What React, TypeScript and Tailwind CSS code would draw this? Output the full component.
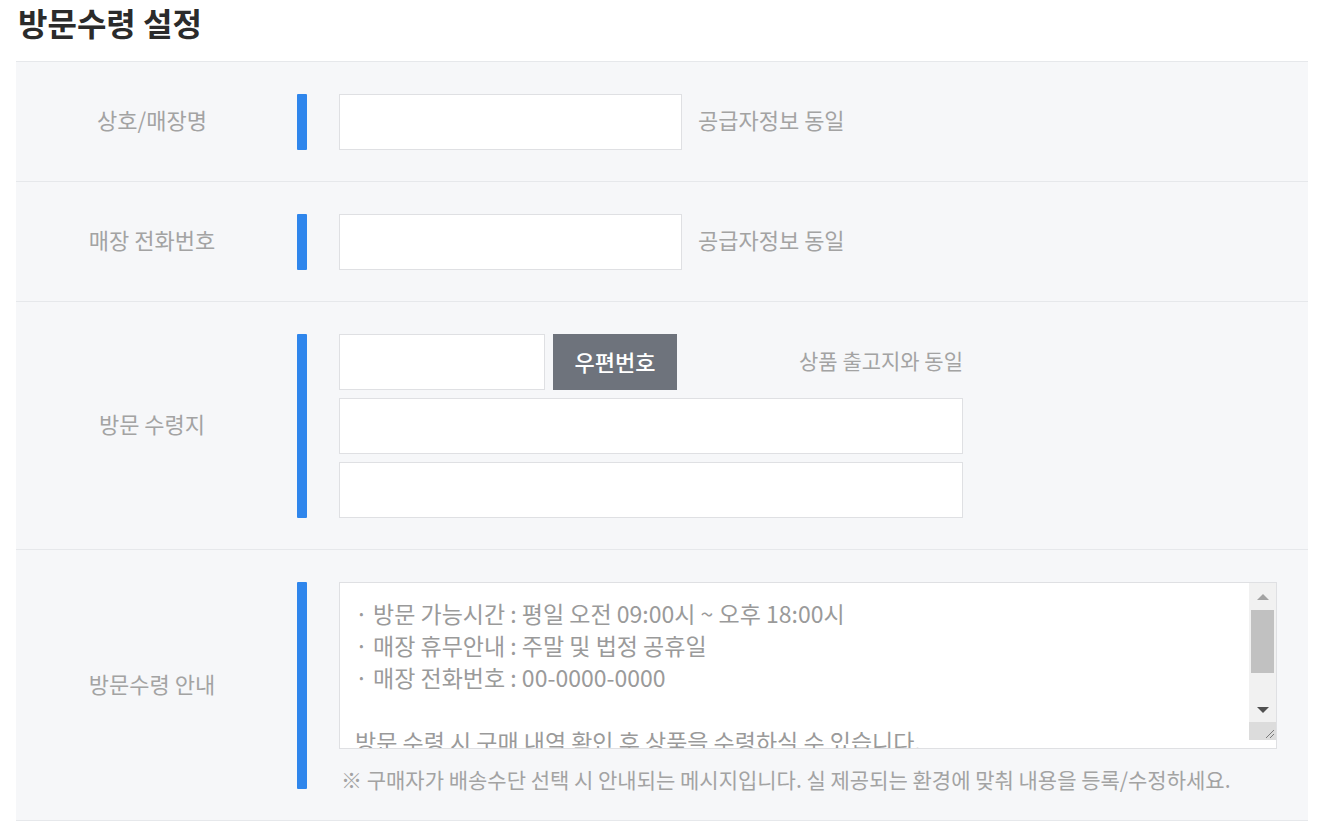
import React from 'react';

const font = "font-['Noto_Sans_CJK_KR','Noto_Sans',sans-serif]";

const guide = `· 방문 가능시간 : 평일 오전 09:00시 ~ 오후 18:00시
· 매장 휴무안내 : 주말 및 법정 공휴일
· 매장 전화번호 : 00-0000-0000

방문 수령 시 구매 내역 확인 후 상품을 수령하실 수 있습니다.`;

const Row: React.FC<{ label: string; children: React.ReactNode }> = ({ label, children }) => (
  <div className="flex border-b border-[#e6e8eb] pt-8 pb-[31px]">
    <div className="w-[272px] flex items-center justify-center pb-[5px] text-[22px] text-[#a3a3a3]">{label}</div>
    <div className="ml-[9px] w-[10px] bg-[#2f86ec] rounded-[1px]" />
    <div className="ml-[32px]">{children}</div>
  </div>
);

const Input: React.FC<{ className?: string }> = ({ className = '' }) => (
  <input type="text" className={`h-[56px] bg-white border border-[#dfe0e3] outline-none ${className}`} />
);

const App: React.FC = () => {
  return (
    <div className={`min-h-screen bg-white pl-4 pr-[10px] ${font}`}>
      <h1 className="leading-[44px] pl-[2px] text-[32px] font-bold text-[#2b2b2b] mb-[17px]">방문수령 설정</h1>

      <div className="bg-[#f6f7f9] border-t border-[#e6e8eb]">
        <Row label="상호/매장명">
          <div className="flex items-center">
            <Input className="w-[343px]" />
            <span className="ml-4 mb-[5px] text-[22px] text-[#a3a3a3]">공급자정보 동일</span>
          </div>
        </Row>

        <Row label="매장 전화번호">
          <div className="flex items-center">
            <Input className="w-[343px]" />
            <span className="ml-4 mb-[5px] text-[22px] text-[#a3a3a3]">공급자정보 동일</span>
          </div>
        </Row>

        <Row label="방문 수령지">
          <div className="w-[624px] flex flex-col gap-2">
            <div className="flex items-center">
              <Input className="w-[206px]" />
              <button className="ml-2 w-[124px] h-[56px] pb-[2px] bg-[#6e737c] text-white text-[22px] font-medium">우편번호</button>
              <span className="ml-auto mb-[3px] text-[21px] text-[#a3a3a3]">상품 출고지와 동일</span>
            </div>
            <Input className="w-full" />
            <Input className="w-full" />
          </div>
        </Row>

        <Row label="방문수령 안내">
          <div className="w-[938px]">
            <div className="h-[167px] flex bg-white border border-[#dfe0e3]">
              <textarea
                readOnly
                defaultValue={guide}
                className="flex-1 resize-none overflow-hidden outline-none pt-[14px] pl-[15px] text-[23px] leading-[32px] text-[#9a9a9a]"
              />
              <div className="w-[27px] flex flex-col pb-[8px]">
                <div className="flex-1 flex flex-col bg-[#f1f1f1]">
                  <div className="h-[27px] flex items-center justify-center">
                    <div className="w-0 h-0 border-l-[6px] border-r-[6px] border-b-[6px] border-l-transparent border-r-transparent border-b-[#a3a3a3]" />
                  </div>
                  <div className="mx-[2px] h-[63px] bg-[#c1c1c1]" />
                  <div className="h-[25px]" />
                  <div className="h-[24px] flex items-center justify-center">
                    <div className="w-0 h-0 border-l-[6px] border-r-[6px] border-t-[6px] border-l-transparent border-r-transparent border-t-[#505050]" />
                  </div>
                  <div className="flex-1 bg-[#dcdcdc] flex items-end justify-end">
                    <svg width="12" height="12" viewBox="0 0 12 12" className="mb-[1px] mr-[1px]">
                      <path d="M11 3 L3 11 M11 7 L7 11" stroke="#7a7a7a" strokeWidth="1" />
                    </svg>
                  </div>
                </div>
              </div>
            </div>
            <p className="mt-5 leading-[20px] text-[21px] text-[#a3a3a3] pl-[2px]">
              ※ 구매자가 배송수단 선택 시 안내되는 메시지입니다. 실 제공되는 환경에 맞춰 내용을 등록/수정하세요.
            </p>
          </div>
        </Row>
      </div>
    </div>
  );
};

export default App;
